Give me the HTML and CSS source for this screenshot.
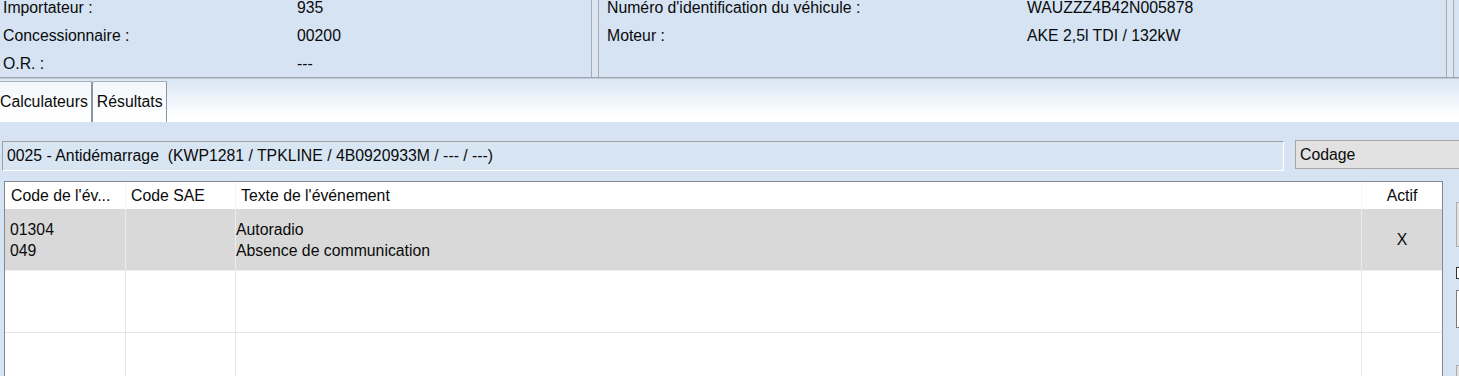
FILE: index.html
```html
<!DOCTYPE html>
<html lang="fr">
<head>
    <meta charset="UTF-8">
    <meta name="viewport" content="width=device-width, initial-scale=1.0">
    <title>Résultats - Antidémarrage</title>
    <link rel="stylesheet" href="styles.css">
</head>
<body>
    <div class="header">
        <div class="panel panel-left">
            <div class="info-grid">
                <span>Importateur :</span><span>935</span>
                <span>Concessionnaire :</span><span>00200</span>
                <span>O.R. :</span><span>---</span>
            </div>
        </div>
        <div class="splitter"></div>
        <div class="panel panel-right">
            <div class="info-grid">
                <span>Numéro d'identification du véhicule :</span><span>WAUZZZ4B42N005878</span>
                <span>Moteur :</span><span>AKE 2,5l TDI / 132kW</span>
            </div>
        </div>
        <div class="splitter"></div>
        <div class="panel panel-extra"></div>
    </div>

    <div class="tabs">
        <div class="tab">Calculateurs</div>
        <div class="tab tab-active">Résultats</div>
    </div>

    <div class="content">
        <div class="title-row">
            <div class="ecu-title">0025 - Antidémarrage&nbsp; (KWP1281 / TPKLINE / 4B0920933M / --- / ---)</div>
            <div class="mode-box">Codage</div>
        </div>

        <div class="main-row">
            <div class="table">
                <div class="row row-head">
                    <div class="cell c1">Code de l'év...</div>
                    <div class="cell c2">Code SAE</div>
                    <div class="cell c3">Texte de l'événement</div>
                    <div class="cell c4">Actif</div>
                </div>
                <div class="row row-selected">
                    <div class="cell c1">01304<br>049</div>
                    <div class="cell c2"></div>
                    <div class="cell c3">Autoradio<br>Absence de communication</div>
                    <div class="cell c4">X</div>
                </div>
                <div class="row">
                    <div class="cell c1"></div>
                    <div class="cell c2"></div>
                    <div class="cell c3"></div>
                    <div class="cell c4"></div>
                </div>
                <div class="row">
                    <div class="cell c1"></div>
                    <div class="cell c2"></div>
                    <div class="cell c3"></div>
                    <div class="cell c4"></div>
                </div>
            </div>

            <div class="side">
                <div class="side-button"></div>
                <div class="side-check"></div>
                <div class="side-field"></div>
                <div class="side-button side-button-low"></div>
            </div>
        </div>
    </div>
</body>
</html>
```

FILE: styles.css
```css
body {
    margin: 0;
    width: 1459px;
    height: 376px;
    overflow: hidden;
    background-color: #d5e3f3;
    font-family: "Liberation Sans", Arial, sans-serif;
    font-size: 15.8px;
    color: #0a0a0a;
}

/* Bandeau d'informations */
.header {
    display: flex;
    height: 77px;
    overflow: hidden;
    border-bottom: 1px solid #9aa3ae;
    box-shadow: 0 1px 0 #c3ccd7;
}

.panel {
    height: 77px;
    overflow: hidden;
}

.panel-left {
    width: 591px;
    border-right: 1px solid #a3acb8;
}

.panel-right {
    width: 847px;
    border-left: 1px solid #a3acb8;
    border-right: 1px solid #a3acb8;
}

.panel-extra {
    flex: 1;
    border-left: 1px solid #a3acb8;
}

.splitter {
    width: 6px;
    background-color: #dce6f1;
}

.info-grid {
    display: grid;
    margin-top: -6px;
    line-height: 28px;
}

.panel-left .info-grid {
    grid-template-columns: 294px 1fr;
    padding-left: 3px;
}

.panel-right .info-grid {
    grid-template-columns: 420px 1fr;
    padding-left: 8px;
}

/* Onglets */
.tabs {
    display: flex;
    align-items: flex-end;
    height: 43px;
    margin-top: 1px;
    background: linear-gradient(#d9e6f4, #ffffff 85%);
}

.tab {
    height: 40px;
    line-height: 40px;
    padding: 0 3px 0 0;
    border-top: 1px solid #a8b0ba;
    border-right: 1px solid #8c96a3;
    background: linear-gradient(#f3f7fb, #ffffff);
}

.tab-active {
    padding: 0 3px 0 4px;
    border-left: 1px solid #8c96a3;
    border-top-left-radius: 3px;
}

/* Contenu */
.content {
    padding: 19px 0 0 2px;
}

.title-row {
    display: flex;
    align-items: flex-start;
}

.ecu-title {
    width: 1276px;
    height: 28px;
    line-height: 28px;
    padding-left: 4px;
    border: 1px solid #a0a0a0;
    border-right-color: #ffffff;
    border-bottom-color: #ffffff;
    background-color: #d8e5f3;
}

.mode-box {
    flex: 1;
    margin-left: 11px;
    margin-top: -1px;
    height: 27px;
    line-height: 27px;
    padding-left: 4px;
    border: 1px solid #a6a6a6;
    border-right: none;
    background-color: #e2e2e2;
}

.main-row {
    display: flex;
    margin-top: 10px;
}

/* Tableau des événements */
.table {
    flex-shrink: 0;
    width: 1437px;
    height: 195px;
    overflow: hidden;
    margin-left: 2px;
    border: 1px solid #828790;
    border-bottom: none;
    background-color: #ffffff;
}

.row {
    display: grid;
    grid-template-columns: 121px 110px 1126px 80px;
    height: 62px;
}

.row-head {
    height: 27px;
}

.cell {
    display: flex;
    align-items: center;
    line-height: 21px;
    border-right: 1px solid #e6e6e6;
    border-bottom: 1px solid #e6e6e6;
}

.cell.c4 {
    border-right: none;
    justify-content: center;
}

.row-head .cell {
    border-color: #f4f4f4;
    border-bottom: none;
}

.row-head .c1 { padding-left: 6px; }
.row-head .c2 { padding-left: 5px; }
.row-head .c3 { padding-left: 5px; }

.c1 { padding-left: 5px; }
.c3 { padding-left: 0; }

.row-selected .cell {
    background-color: #d9d9d9;
    border-right-color: #ececec;
    border-bottom-color: #eeeeee;
}

/* Commandes à droite, coupées par le bord */
.side {
    display: flex;
    flex-direction: column;
    flex-shrink: 0;
    margin-left: 13px;
    width: 20px;
}

.side-button {
    height: 43px;
    margin-top: 21px;
    border: 1px solid #adadad;
    background-color: #e1e1e1;
}

.side-check {
    width: 12px;
    height: 10px;
    margin-top: 20px;
    border: 1px solid #333;
    background-color: #fff;
}

.side-field {
    height: 36px;
    margin-top: 11px;
    border: 1px solid #7a7a7a;
    background-color: #fff;
}

.side-button-low {
    margin-top: 37px;
}
```
